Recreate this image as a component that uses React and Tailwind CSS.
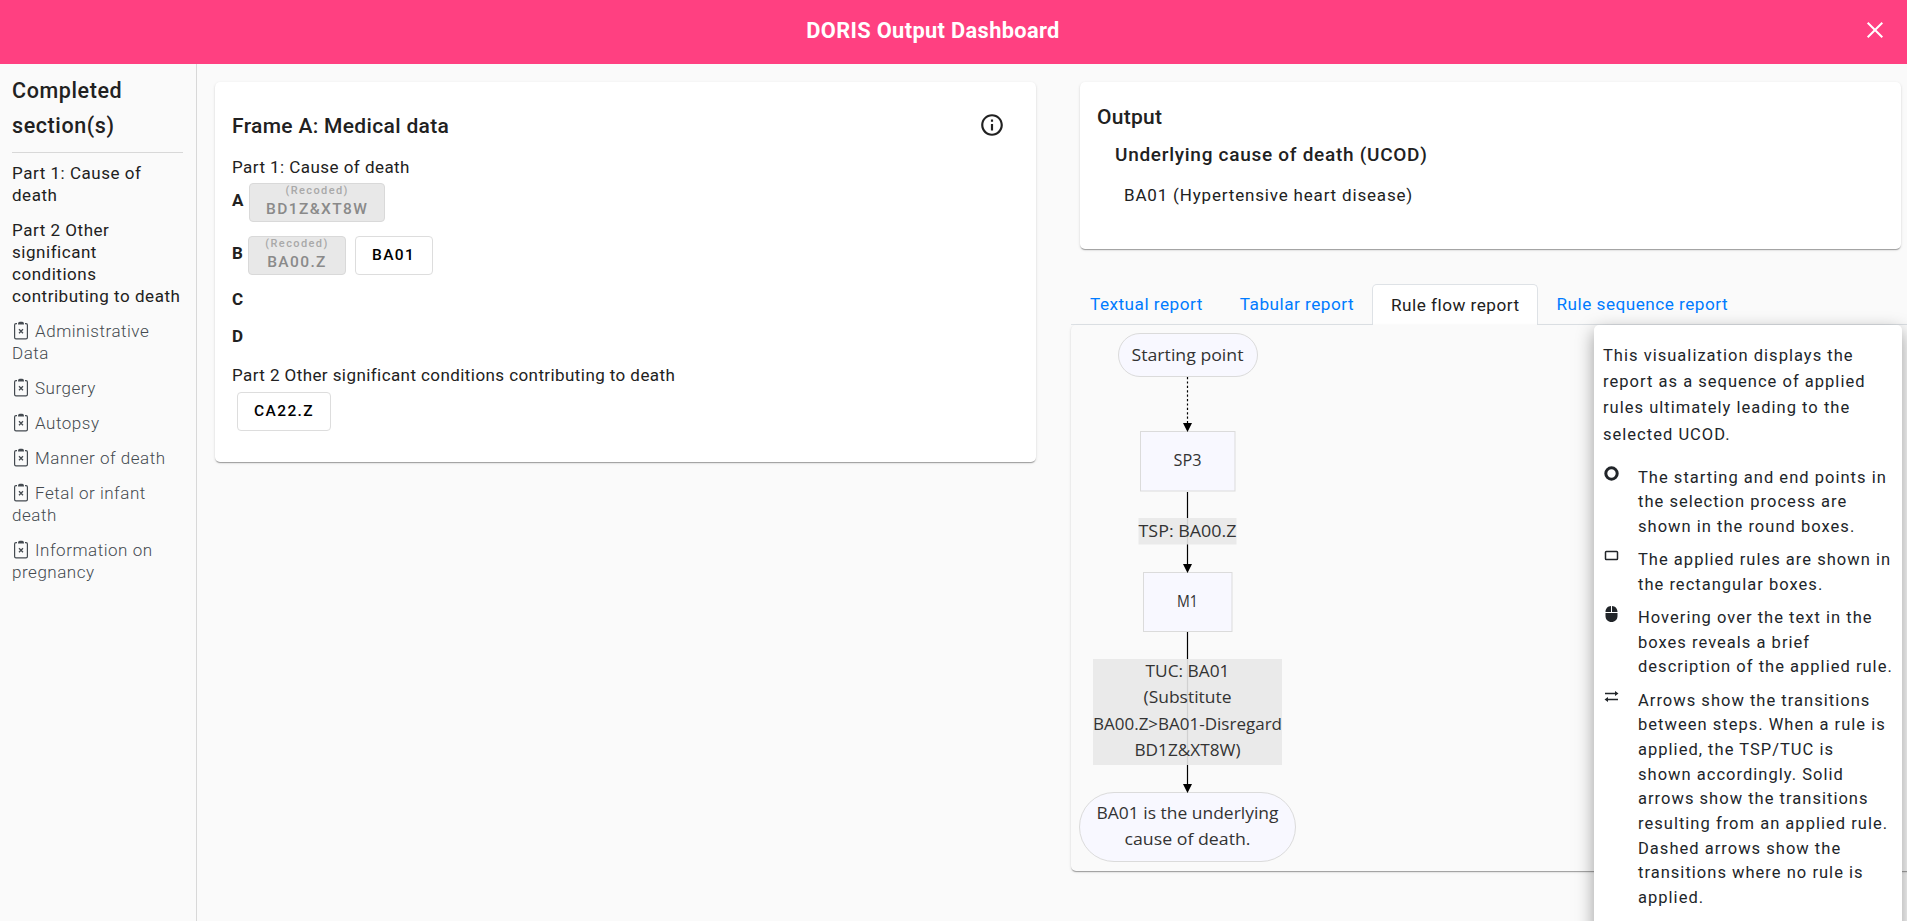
import { MdInfoOutline } from "react-icons/md";

const SECTIONS_DONE = ["Part 1: Cause of death", "Part 2 Other significant conditions contributing to death"];
const SECTIONS_EMPTY = [
  "Administrative Data",
  "Surgery",
  "Autopsy",
  "Manner of death",
  "Fetal or infant death",
  "Information on pregnancy",
];

function ClipboardX() {
  return (
    <svg viewBox="0 0 18 19" className="mr-[5px] inline h-[19px] w-[18px] align-[-3px]" fill="none" stroke="currentColor">
      <path d="M5 2.600H4A1.400 1.400 0 0 0 2.600 4v12.400A1.400 1.400 0 0 0 4 17.800h10a1.400 1.400 0 0 0 1.400-1.400V4A1.400 1.400 0 0 0 14 2.600h-1" strokeWidth="1.200" />
      <path d="M6 3.400c0-1.900.8-2.600 1.800-2.600h2.400c1 0 1.800.7 1.800 2.600z" fill="currentColor" stroke="none" />
      <path d="M7 8.300l4 4M11 8.300l-4 4" strokeWidth="1.300" />
    </svg>
  );
}

function Sidebar() {
  return (
    <aside className="w-[197px] shrink-0 border-r border-[#d8d8d8] pl-3 pr-[13px] pt-[9px]">
      <h2 className="text-[21.5px] font-medium leading-[35px] tracking-[0.6px]">Completed section(s)</h2>
      <hr className="mt-[9px] border-[#d8d8d8]" />
      <ul className="mt-[9px] flex flex-col gap-[13px] text-[17px] leading-[22px] tracking-[0.53px]">
        {SECTIONS_DONE.map((s) => (
          <li key={s}>{s}</li>
        ))}
        {SECTIONS_EMPTY.map((s) => (
          <li key={s} className="font-light text-[#444a50]">
            <ClipboardX />
            {s}
          </li>
        ))}
      </ul>
    </aside>
  );
}

function Code({ children, recoded }) {
  if (recoded) {
    return (
      <div className="flex h-[39px] min-w-[98px] flex-col items-center rounded border border-[#d9d9d9] bg-[#e8e8e8] px-4 font-medium">
        <span className="text-[11px] leading-[13px] tracking-[1.4px] text-[#a9a9a9]">(Recoded)</span>
        <span className="mt-[3px] text-[15.5px] leading-[18px] tracking-[1.4px] text-[#8a8a8a]">{children}</span>
      </div>
    );
  }
  return (
    <div className="h-[39px] min-w-[78px] rounded border border-[#dddddd] bg-white px-4 text-[15.5px] font-medium leading-[36px] tracking-[1.4px] text-black">
      {children}
    </div>
  );
}

const CARD = "rounded-[5px] bg-white shadow-[0_2px_1px_-1px_rgba(0,0,0,.2),0_1px_1px_0_rgba(0,0,0,.14),0_1px_3px_0_rgba(0,0,0,.12)]";

function MedicalData() {
  return (
    <section className={`${CARD} h-[380px] w-[821px] pl-[17px] pr-[31px] pt-[26px]`}>
      <div className="flex h-9 items-center justify-between">
        <h2 className="pt-px text-[21px] font-medium tracking-[0.33px]">Frame A: Medical data</h2>
        <MdInfoOutline className="size-[26px] -translate-y-px" />
      </div>
      <p className="mt-[11px] text-[17px] leading-6 tracking-[0.45px]">Part 1: Cause of death</p>
      <div className="mt-[4px] flex h-[39px] items-center text-[17px]">
        <b className="w-[17px] pb-[3px]">A</b>
        <Code recoded>BD1Z&amp;XT8W</Code>
      </div>
      <div className="mt-[14px] flex h-[39px] items-center text-[17px]">
        <b className="w-4 pb-[3px]">B</b>
        <Code recoded>BA00.Z</Code>
        <div className="w-[9px]" />
        <Code>BA01</Code>
      </div>
      <b className="mt-[11px] block text-[17px] leading-[26px]">C</b>
      <b className="mt-[11px] block text-[17px] leading-[26px]">D</b>
      <p className="mt-[14px] text-[17px] leading-6 tracking-[0.42px]">Part 2 Other significant conditions contributing to death</p>
      <div className="ml-[5px] mt-[5px] flex">
        <Code>CA22.Z</Code>
      </div>
    </section>
  );
}

function Line({ y, w, children }) {
  return (
    <text x="116.500" y={y} textAnchor="middle" textLength={w} lengthAdjust="spacingAndGlyphs">
      {children}
    </text>
  );
}

function Flow() {
  return (
    <svg width="240" height="546" viewBox="0 0 240 546" className="block" fontFamily="'Open Sans', sans-serif" fontSize="16.8" fill="#333" stroke="none">
      <g fill="#f8f8ff" stroke="#dbdbdb">
        <rect x="47.5" y="8.5" width="139" height="43" rx="21.5" />
        <rect x="69.5" y="106.5" width="94.500" height="59.500" />
        <rect x="72.5" y="247.5" width="88.500" height="59" />
        <rect x="8.5" y="467.5" width="216" height="69" rx="34.5" />
      </g>
      <g stroke="#000" strokeWidth="1.2" fill="none">
        <path d="M116.5 52V100" strokeDasharray="2.2" />
        <path d="M116.5 167V240M116.5 307V460" />
      </g>
      <path d="M112 98h9l-4.500 9zM112 239h9l-4.500 9zM112 459h9l-4.500 9z" fill="#000" />
      <g fill="#e8e8e8" fillOpacity="0.9">
        <rect x="67.500" y="193" width="98" height="26.500" />
        <rect x="22" y="334" width="189" height="106" />
      </g>
      <Line y="35.500" w="112">Starting point</Line>
      <Line y="141.400" w="28">SP3</Line>
      <Line y="212.400" w="98">TSP: BA00.Z</Line>
      <Line y="282.400" w="21">M1</Line>
      <Line y="352.400" w="84">TUC: BA01</Line>
      <Line y="378.400" w="88">(Substitute</Line>
      <Line y="405.400" w="189">BA00.Z&gt;BA01-Disregard</Line>
      <Line y="431.400" w="106">BD1Z&amp;XT8W)</Line>
      <Line y="494.400" w="182">BA01 is the underlying</Line>
      <Line y="520.400" w="126">cause of death.</Line>
    </svg>
  );
}

const NOTES = [
  {
    icon: <circle cx="8.500" cy="7.500" r="5.700" fill="none" stroke="currentColor" strokeWidth="3" />,
    text: "The starting and end points in the selection process are shown in the round boxes.",
  },
  {
    icon: <rect x="2.500" y="3.500" width="12" height="8" rx="0.800" fill="none" stroke="currentColor" strokeWidth="1.500" />,
    text: "The applied rules are shown in the rectangular boxes.",
  },
  {
    icon: <path d="M8 0v6H2.500C2.500 2.500 4.700 0.300 8 0zM9 0v6h5.500C14.500 2.500 12.300 0.300 9 0zM2.500 7h12v3c0 3.500-2.500 6-6 6s-6-2.500-6-6z" fill="currentColor" />,
    text: "Hovering over the text in the boxes reveals a brief description of the applied rule.",
  },
  {
    icon: <path d="M2 4.500H12.500M4.500 10.500H15" stroke="currentColor" strokeWidth="1.500" />,
    heads: <path d="M12 1.900l3.500 2.600L12 7.100zM5 7.900L1.500 10.500 5 13.100z" fill="currentColor" />,
    text: "Arrows show the transitions between steps. When a rule is applied, the TSP/TUC is\nshown accordingly. Solid arrows show the transitions resulting from an applied rule. Dashed arrows show the transitions where no rule is applied.",
  },
];

function Help() {
  return (
    <div className="absolute left-[523px] top-0 h-[640px] w-[308px] rounded-[5px] bg-white pl-[9px] pr-[4px] pt-[18px] text-[16.5px] tracking-[1.02px] text-[#212529] shadow-[0_6px_18px_rgba(0,0,0,.38)]">
      <p className="leading-[26.200px]">This visualization displays the report as a sequence of applied rules ultimately leading to the selected UCOD.</p>
      <ul className="mt-[18px] flex flex-col gap-[8.500px] leading-[24.650px]">
        {NOTES.map((n) => (
          <li key={n.text} className="flex">
            <svg viewBox="0 0 16 16" className="size-4 shrink-0">
              {n.icon}
              {n.heads}
            </svg>
            <span className="ml-[19px] whitespace-pre-line">{n.text}</span>
          </li>
        ))}
      </ul>
    </div>
  );
}

function Tab({ children, active }) {
  return (
    <button
      className={
        active
          ? "relative -mb-px h-[41px] rounded-t-[5px] border border-b-0 border-[#dee2e6] bg-white pl-[18px] pr-[17px] pt-px"
          : "h-10 pl-[19px] pr-[18px] pt-[2px] text-[#007bff]"
      }
    >
      {children}
    </button>
  );
}

export default function App() {
  return (
    <div className="flex h-[921px] w-[1907px] flex-col overflow-hidden bg-[#fafafa] font-['Roboto',sans-serif] text-[#212121]">
      <header className="flex h-16 shrink-0 items-center bg-[#ff4081] pb-[2px] pr-[23px] text-white">
        <h1 className="grow text-center text-[21.800px] font-bold tracking-[0.350px]">DORIS Output Dashboard</h1>
        <svg viewBox="0 0 18 18" className="size-[18px] -translate-y-px">
          <path d="M1.700 1.700l14.600 14.600M16.300 1.700L1.700 16.300" stroke="currentColor" strokeWidth="2" />
        </svg>
      </header>
      <div className="flex min-h-0 grow">
        <Sidebar />
        <main className="flex grow pl-[18px] pt-[18px]">
          <MedicalData />
          <div className="ml-[35px] flex w-[836px] flex-col">
            <section className={`${CARD} ml-[9px] h-[167px] w-[821px] shrink-0 pl-[17px] pt-[18px]`}>
              <h2 className="text-[21px] font-medium leading-[34px] tracking-[0.280px]">Output</h2>
              <h3 className="ml-[18px] mt-[3px] text-[19px] font-medium leading-[36px] tracking-[0.720px]">Underlying cause of death (UCOD)</h3>
              <p className="ml-[27px] mt-2 text-[17px] leading-7 tracking-[0.820px]">BA01 (Hypertensive heart disease)</p>
            </section>
            <nav className="mt-[35px] flex h-[41px] shrink-0 items-end border-b border-[#dee2e6] text-[17.200px] tracking-[0.480px]">
              <Tab>Textual report</Tab>
              <Tab>Tabular report</Tab>
              <Tab active>Rule flow report</Tab>
              <Tab>Rule sequence report</Tab>
            </nav>
            <section className="relative h-[546px] w-[850px] shrink-0 rounded-[5px] shadow-[0_2px_1px_-1px_rgba(0,0,0,.2),0_1px_1px_0_rgba(0,0,0,.14),0_1px_3px_0_rgba(0,0,0,.12)]">
              <Flow />
              <Help />
            </section>
          </div>
        </main>
      </div>
    </div>
  );
}
